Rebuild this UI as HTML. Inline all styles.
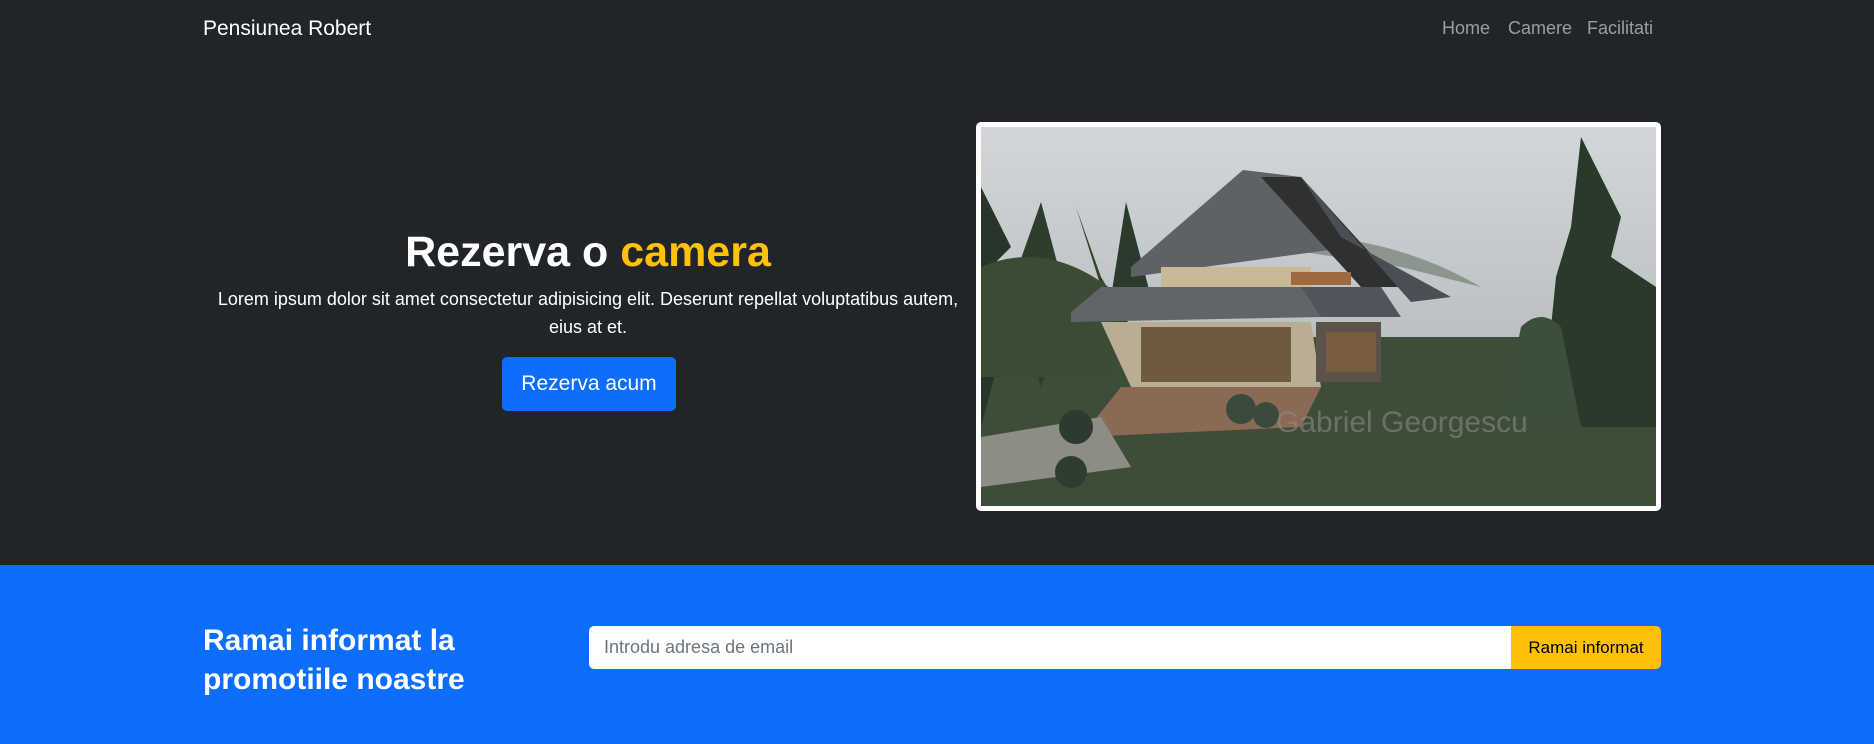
<!DOCTYPE html>
<html><head><meta charset="utf-8"><style>
*{margin:0;padding:0;box-sizing:border-box}
body{width:1874px;height:744px;overflow:hidden;background:#212529;font-family:"Liberation Sans",sans-serif}
.nav{position:absolute;top:0;left:0;width:1874px;height:56px}
.brand{position:absolute;left:203px;top:17px;font-size:21px;color:#fff}
.links{position:absolute;top:18px;left:1442px;font-size:18px;color:rgba(255,255,255,.55)}
.links span{position:absolute;white-space:nowrap}
h1{position:absolute;left:203px;width:770px;text-align:center;top:228px;font-size:43px;font-weight:bold;color:#fff}
h1 b{color:#ffc107}
p.lead{position:absolute;left:193px;width:790px;text-align:center;top:285px;font-size:18px;line-height:28px;color:#fff}
.btn{position:absolute;left:502px;top:357px;width:174px;height:54px;background:#0d6efd;border-radius:5px;color:#fff;font-size:21px;text-align:center;line-height:54px}
.img{position:absolute;left:976px;top:122px;width:685px;height:389px;background:#fff;border-radius:5px;padding:5px}
.blue{position:absolute;top:565px;left:0;width:1874px;height:179px;background:#0d6efd}
.blue h2{position:absolute;left:203px;top:56px;font-size:30px;line-height:39px;color:#fff;font-weight:bold}
.inp{position:absolute;left:589px;top:61px;width:922px;height:43px;background:#fff;border-radius:5px 0 0 5px;color:#6c757d;font-size:18px;line-height:43px;padding-left:15px}
.sub{position:absolute;left:1511px;top:61px;width:150px;height:43px;background:#ffc107;border-radius:0 5px 5px 0;color:#000;font-size:17px;line-height:43px;text-align:center}
</style></head><body>
<div class="nav"><div class="brand">Pensiunea Robert</div>
<div class="links"><span style="left:0">Home</span><span style="left:66px">Camere</span><span style="left:145px">Facilitati</span></div></div>
<h1>Rezerva o <b>camera</b></h1>
<p class="lead">Lorem ipsum dolor sit amet consectetur adipisicing elit. Deserunt repellat voluptatibus autem,<br>eius at et.</p>
<div class="btn">Rezerva acum</div>
<div class="img"><svg width="675" height="379" viewBox="0 0 675 379" style="display:block">
<defs><linearGradient id="s" x1="0" y1="0" x2="0" y2="1"><stop offset="0" stop-color="#d2d6da"/><stop offset="1" stop-color="#a8b0ae"/></linearGradient></defs>
<rect width="675" height="379" fill="url(#s)"/>
<rect y="210" width="675" height="169" fill="#3e4d38"/>
<path d="M0 60L30 120L10 140L40 150L0 300Z" fill="#27352a"/>
<path d="M60 75L80 150L95 160L60 260L30 160Z" fill="#2e3d2c"/>
<path d="M95 80L120 160L90 200L150 200L120 150Z" fill="#33432f"/>
<path d="M145 75L170 170L130 170Z" fill="#2b3a2a"/>
<path d="M0 140Q70 110 140 170L130 250L0 250Z" fill="#3a4c34"/>
<path d="M600 10L640 90L630 130L675 160L675 300L560 300L575 150L590 100Z" fill="#2a3a2a"/>
<path d="M540 200Q560 180 580 200L600 300L520 300Z" fill="#3c4f3a"/>
<path d="M290 120L230 115Q380 90 500 160L420 140Z" fill="#8c968e"/>
<path d="M150 140L262 43L320 50L370 120L150 150Z" fill="#5e6266"/>
<path d="M280 50L320 50L420 160L380 160Z" fill="#2f3030"/>
<path d="M320 50L360 110L470 170L430 175Z" fill="#4a4f55"/>
<path d="M180 140L330 140L330 160L180 160Z" fill="#c9b896"/>
<path d="M310 145L370 145L370 158L310 158Z" fill="#a06a40"/>
<path d="M90 185L120 160L330 160L340 190L90 195Z" fill="#616569"/>
<path d="M320 160L400 160L420 190L340 190Z" fill="#4f555a"/>
<path d="M120 195L330 195L340 260L150 260Z" fill="#b9ad93"/>
<path d="M160 200L310 200L310 255L160 255Z" fill="#6e5a3c"/>
<path d="M335 195L400 195L400 255L335 255Z" fill="#5b534a"/>
<path d="M345 205L395 205L395 245L345 245Z" fill="#7a5c40"/>
<path d="M140 260L340 260L320 300L100 310Z" fill="#8a6a55"/>
<path d="M0 310L120 290L150 340L0 360Z" fill="#8d8d86"/>
<circle cx="95" cy="300" r="17" fill="#2d3a2f"/><circle cx="90" cy="345" r="16" fill="#2f3d31"/>
<circle cx="260" cy="282" r="15" fill="#3a4a3c"/><circle cx="285" cy="288" r="13" fill="#3a4a3c"/>
<text x="295" y="305" font-family="Liberation Sans" font-size="30" fill="#8a8a84" opacity=".6">Gabriel Georgescu</text>
</svg></div>
<div class="blue"><h2>Ramai informat la<br>promotiile noastre</h2>
<div class="inp">Introdu adresa de email</div><div class="sub">Ramai informat</div></div>
</body></html>
